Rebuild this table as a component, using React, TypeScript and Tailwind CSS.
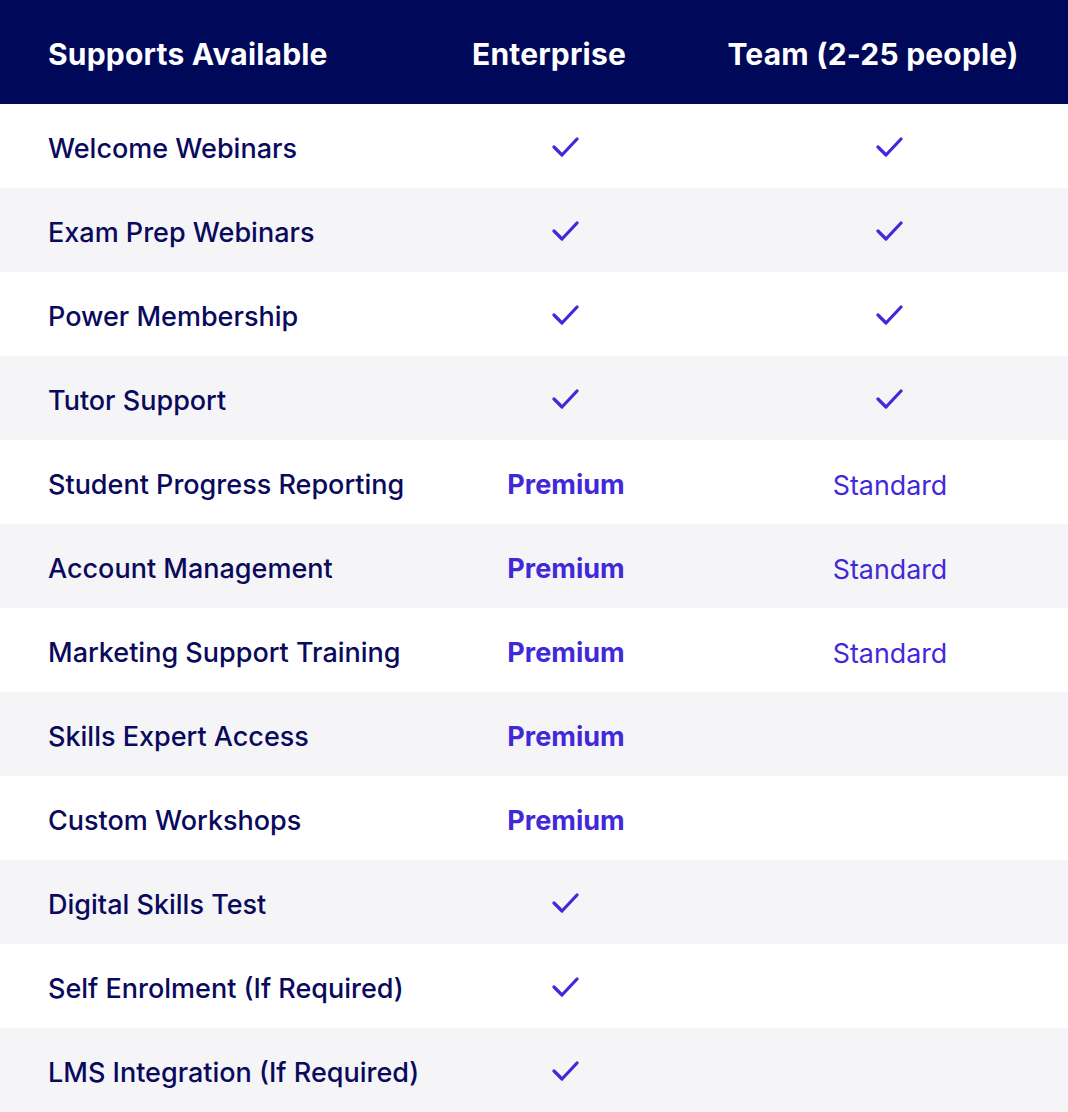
import React from 'react';

type Cell = 'check' | 'premium' | 'standard' | null;

const rows: { label: string; ent: Cell; team: Cell }[] = [
    { label: 'Welcome Webinars', ent: 'check', team: 'check' },
    { label: 'Exam Prep Webinars', ent: 'check', team: 'check' },
    { label: 'Power Membership', ent: 'check', team: 'check' },
    { label: 'Tutor Support', ent: 'check', team: 'check' },
    { label: 'Student Progress Reporting', ent: 'premium', team: 'standard' },
    { label: 'Account Management', ent: 'premium', team: 'standard' },
    { label: 'Marketing Support Training', ent: 'premium', team: 'standard' },
    { label: 'Skills Expert Access', ent: 'premium', team: null },
    { label: 'Custom Workshops', ent: 'premium', team: null },
    { label: 'Digital Skills Test', ent: 'check', team: null },
    { label: 'Self Enrolment (If Required)', ent: 'check', team: null },
    { label: 'LMS Integration (If Required)', ent: 'check', team: null },
];

const Check = () => (
    <svg width="28" height="22" viewBox="0 0 28 22" fill="none" className="text-[#4128d9]">
        <polyline points="2,11 10,19 25,3" stroke="currentColor" strokeWidth="3.2" strokeLinecap="round" strokeLinejoin="round" />
    </svg>
);

const Value = ({ value }: { value: Cell }) => {
    if (value === 'check') return <Check />;
    if (value === 'premium') return <span className="pt-[5px] font-bold text-[#4128d9] text-[27px]">Premium</span>;
    if (value === 'standard') return <span className="pt-[5px] font-normal text-[#4128d9] text-[26.8px]">Standard</span>;
    return null;
};

export default function App() {
    return (
        <div className="w-[1068px] bg-white font-['Inter',sans-serif] text-[27px] whitespace-nowrap">
            <div className="grid grid-cols-[420px_292px_356px] h-[104px] items-center pt-[4px] bg-[#00085a] text-white font-bold text-[30px] tracking-[0.2px]">
                <div className="pl-[48px]">Supports Available</div>
                <div className="text-center pr-[34px]">Enterprise</div>
                <div className="text-center pr-[34px]">Team (2-25 people)</div>
            </div>
            {rows.map((row, i) => (
                <div
                    key={row.label}
                    className={`grid grid-cols-[420px_292px_356px] h-[84px] items-center pt-[2px] ${i % 2 === 1 ? 'bg-[#f5f5f8]' : 'bg-white'}`}
                >
                    <div className="pl-[48px] pt-[5px] text-[#0a0a5c] font-medium">{row.label}</div>
                    <div className="flex justify-center"><Value value={row.ent} /></div>
                    <div className="flex justify-center"><Value value={row.team} /></div>
                </div>
            ))}
        </div>
    );
}
